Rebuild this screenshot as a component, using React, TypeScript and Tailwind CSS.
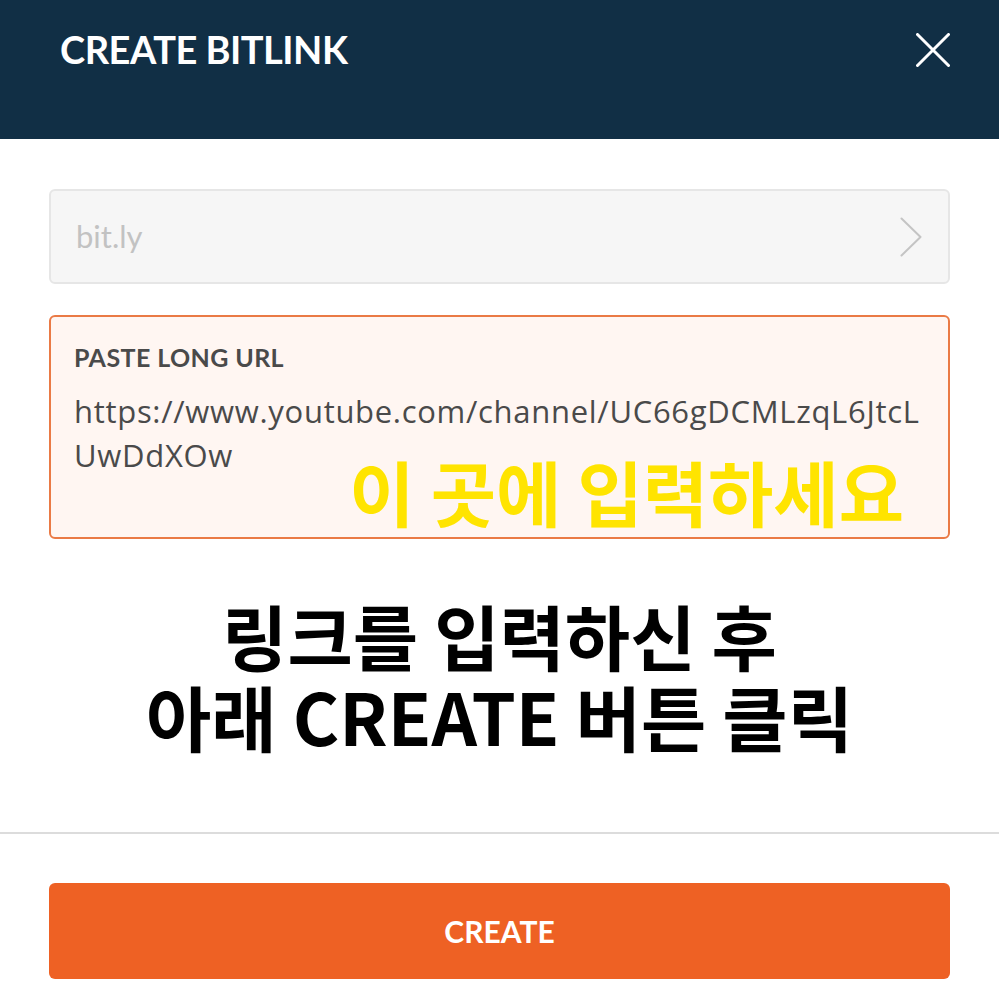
const latin = { fontFamily: "Lato, 'Open Sans', 'Noto Sans CJK KR', sans-serif" }
const url = { fontFamily: "'Open Sans', Lato, sans-serif" }
const korean = { fontFamily: "'Noto Sans CJK KR', 'Noto Sans', sans-serif" }

export default function App() {
    return (
        <div className="flex h-[999px] w-[999px] flex-col bg-white" style={latin}>
            {/* Header */}
            <div className="flex h-[139px] shrink-0 items-start justify-between bg-[#112f45] pl-[60px] pr-[49px] pt-[26px]">
                <h1 className="text-[38px] font-bold leading-[46px] tracking-[-0.5px] text-white">CREATE BITLINK</h1>
                <svg className="mt-[7px] h-[34px] w-[34px]" viewBox="0 0 34 34" fill="none" stroke="white" strokeWidth="3" strokeLinecap="round">
                    <path d="M1.5 1.5 L32.5 32.5 M32.5 1.5 L1.5 32.5" />
                </svg>
            </div>

            <div className="flex flex-col px-[49px] pt-[50px]">
                {/* Domain select */}
                <div className="flex h-[95px] items-center justify-between rounded-[6px] border-2 border-[#e6e6e6] bg-[#f6f6f6] pl-[25px] pr-[26px]">
                    <span className="text-[31px] text-[#c2c2c2]">bit.ly</span>
                    <svg className="h-[40px] w-[22px]" viewBox="0 0 22 40" fill="none" stroke="#c4c4c4" strokeWidth="2" strokeLinecap="round" strokeLinejoin="round">
                        <path d="M1.5 1.5 L20.5 20 L1.5 38.5" />
                    </svg>
                </div>

                {/* Long URL field */}
                <div className="relative mt-[31px] h-[224px] rounded-[6px] border-2 border-[#ea7a45] bg-[#fff6f2] pl-[23px] pt-[25px]">
                    <div className="text-[25px] font-bold leading-[30px] tracking-[0.4px] text-[#4a4a4a]">PASTE LONG URL</div>
                    <div className="mt-[17px] text-[31px] leading-[44px] tracking-[0.7px] text-[#4a4a4a]" style={url}>
                        <div>https://www.youtube.com/channel/UC66gDCMLzqL6JtcL</div>
                        <div>UwDdXOw</div>
                    </div>
                    <div
                        className="absolute bottom-[4px] right-[44px] text-[71px] font-bold leading-[86px] text-[#ffe400]"
                        style={korean}
                    >
                        이 곳에 입력하세요
                    </div>
                </div>
            </div>

            {/* Instruction */}
            <div
                className="mt-[55px] flex flex-col items-center text-[71px] font-bold leading-[81px] text-black"
                style={korean}
            >
                <div>링크를 입력하신 후</div>
                <div>아래 CREATE 버튼 클릭</div>
            </div>

            <div className="mt-auto h-[2px] w-full bg-[#dcdcdc]" />

            <div className="px-[49px] pb-[20px] pt-[49px]">
                <button className="flex h-[96px] w-full items-center justify-center rounded-[6px] bg-[#ee6124] text-[30px] font-bold text-white">
                    CREATE
                </button>
            </div>
        </div>
    )
}
